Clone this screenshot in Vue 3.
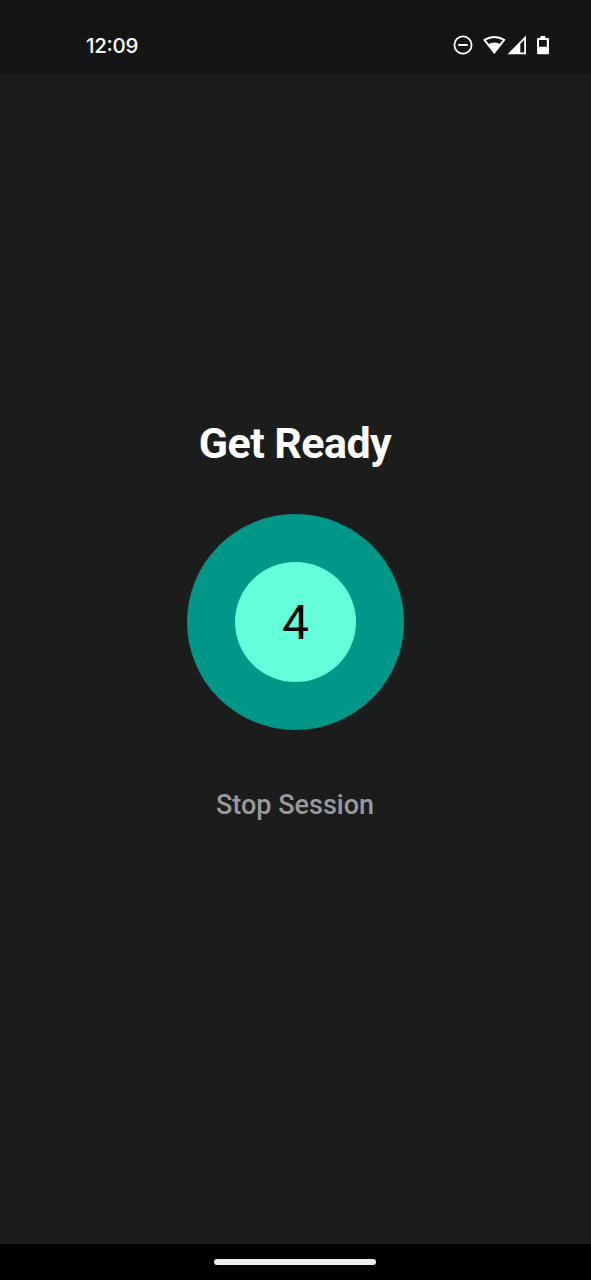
<script setup>
import { ref } from 'vue'

const time = ref('12:09')
const count = ref(4)
</script>

<template>
  <div class="screen">
    <header class="status">
      <span class="clock">{{ time }}</span>
      <svg class="icons" viewBox="0 0 100 24" width="100" height="24" aria-hidden="true">
        <circle cx="13" cy="12" r="8.6" fill="none" stroke="#fff" stroke-width="1.8" />
        <path d="M8.3 12H17.7" stroke="#fff" stroke-width="2" />
        <path d="M34.4 6.9Q44.3 1 54.2 6.9L44.3 19.5Z" fill="none" stroke="#fff" stroke-width="1.9" stroke-linejoin="round" />
        <path d="M37.4 11.8Q44.3 7.4 51.2 11.8L44.3 20.8Z" fill="#fff" />
        <path fill-rule="evenodd" d="M57.5 21.3L76 2.6V21.3ZM70.3 10.9V19.4H74.2V7Z" fill="#fff" />
        <path fill-rule="evenodd" d="M90.4 3H95.3V5H98Q99 5 99 6V20.3Q99 21.3 98 21.3H88Q87 21.3 87 20.3V6Q87 5 88 5H90.4ZM89 7V13.7H96.8V7Z" fill="#fff" />
      </svg>
    </header>

    <main class="session">
      <h1 class="title">Get Ready</h1>
      <div class="ring">
        <div class="core">{{ count }}</div>
      </div>
      <button class="stop" type="button">Stop Session</button>
    </main>

    <footer class="nav"><span class="handle"></span></footer>
  </div>
</template>

<style>
body {
  background: #1b1d1c;
}
</style>

<style scoped>
.screen {
  display: flex;
  flex-direction: column;
  height: 1280px;
  background: #1b1d1c;
  color: #fff;
  font-family: Roboto, sans-serif;
}
.status {
  display: flex;
  justify-content: space-between;
  box-sizing: border-box;
  height: 74px;
  padding: 33px 41px 0 86px;
  background: #141615;
}
.clock {
  font-family: Inter, sans-serif;
  font-size: 20.5px;
  font-weight: 500;
  line-height: 26px;
  letter-spacing: -0.3px;
  font-feature-settings: "case";
}
.session {
  display: flex;
  flex: 1;
  flex-direction: column;
  align-items: center;
  padding-top: 344px;
}
.title {
  margin: 0 1px 0 0;
  font-size: 43px;
  font-weight: 700;
  line-height: 50px;
  letter-spacing: -0.55px;
}
.ring {
  display: flex;
  align-items: center;
  justify-content: center;
  width: 217px;
  height: 216px;
  margin-top: 46px;
  border-radius: 50%;
  background: #009688;
}
.core {
  width: 121px;
  height: 120px;
  border-radius: 50%;
  background: #64ffda;
  color: #000;
  font-size: 48px;
  line-height: 121px;
  text-align: center;
}
.stop {
  margin: 59px 1px 0 0;
  padding: 0;
  border: 0;
  background: none;
  color: #989998;
  font: 500 27px/32px Roboto, sans-serif;
}
.nav {
  display: flex;
  align-items: center;
  justify-content: center;
  height: 36px;
  padding-right: 1px;
  background: #000;
}
.handle {
  width: 162px;
  height: 6px;
  border-radius: 3px;
  background: #eeebee;
}
</style>
